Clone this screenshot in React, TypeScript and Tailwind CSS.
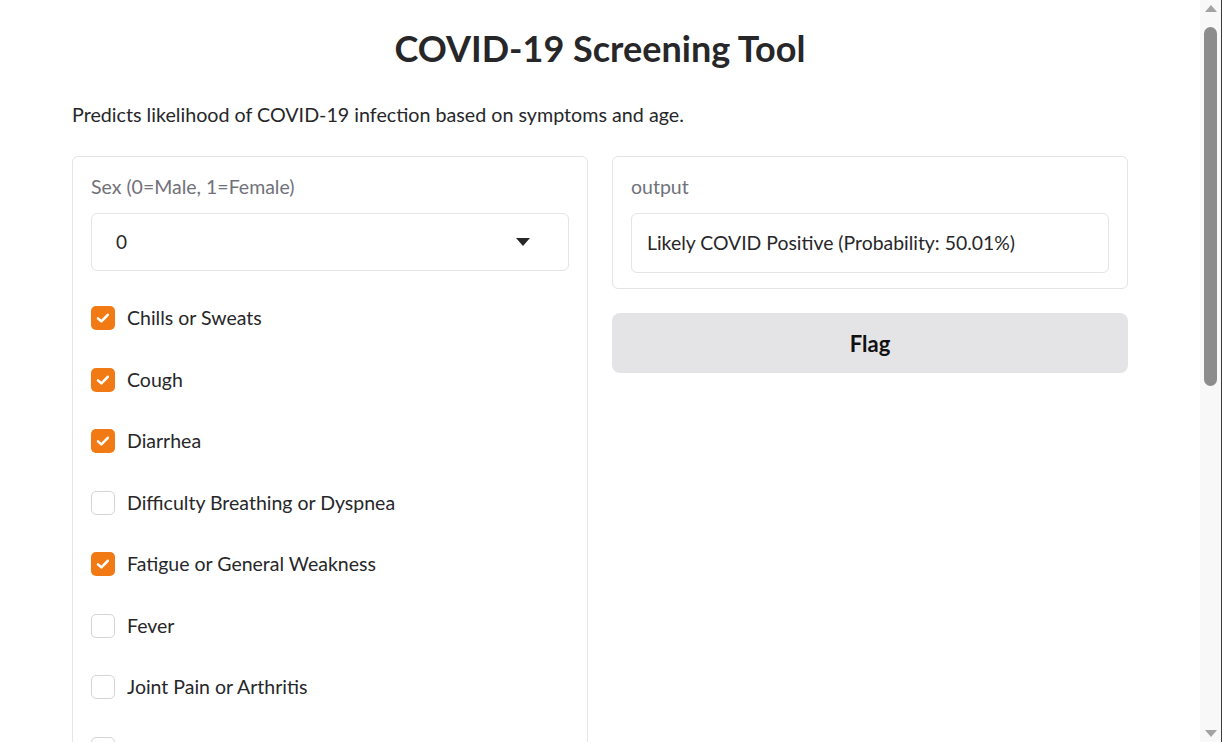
import React from "react";

const items: { label: string; checked: boolean }[] = [
  { label: "Chills or Sweats", checked: true },
  { label: "Cough", checked: true },
  { label: "Diarrhea", checked: true },
  { label: "Difficulty Breathing or Dyspnea", checked: false },
  { label: "Fatigue or General Weakness", checked: true },
  { label: "Fever", checked: false },
  { label: "Joint Pain or Arthritis", checked: false },
  { label: "Loss of Smell", checked: false },
  { label: "Loss of Taste", checked: false },
];

function Box({ checked }: { checked: boolean }) {
  if (checked) {
    return (
      <div className="w-[24px] h-[24px] rounded-[5px] bg-[#f27a14] flex items-center justify-center shrink-0">
        <svg width="16" height="16" viewBox="0 0 16 16" fill="none">
          <path d="M3 8.4 L6.4 11.4 L12.8 4.8" stroke="white" strokeWidth="2.6" strokeLinecap="round" strokeLinejoin="round" />
        </svg>
      </div>
    );
  }
  return <div className="w-[24px] h-[24px] rounded-[5px] border border-[#d4d4d8] bg-white shrink-0" />;
}

export default function App() {
  return (
    <div
      className="flex h-[742px] w-full overflow-hidden bg-white text-[#27272a]"
      style={{ fontFamily: "Lato, 'Noto Sans', sans-serif" }}
    >
      <div className="flex-1 min-w-0">
        <div className="w-[1056px] mx-auto">
          <h1 className="pt-[26px] text-center text-[36px] leading-[44px] font-bold text-[#27272a]">
            COVID-19 Screening Tool
          </h1>
          <p className="mt-[31px] text-[19.7px] leading-[27px]">
            Predicts likelihood of COVID-19 infection based on symptoms and age.
          </p>
          <div className="mt-[28px] grid grid-cols-[516px_516px] gap-[24px] items-start">
            <div className="border border-[#e4e4e7] rounded-[6px] px-[18px] pt-[16px] pb-[30px]">
              <div className="text-[19.5px] leading-[27px] text-[#71717a]">Sex (0=Male, 1=Female)</div>
              <div className="mt-[13px] h-[58px] border border-[#e4e4e7] rounded-[6px] flex items-center pl-[24px] pr-[38px] justify-between">
                <span className="text-[19px]">0</span>
                <svg width="14" height="8" viewBox="0 0 14 8">
                  <path d="M0 0 L14 0 L7 8 Z" fill="#27272a" />
                </svg>
              </div>
              <div className="mt-[35px] flex flex-col gap-[37.5px]">
                {items.map((it) => (
                  <div key={it.label} className="flex items-center gap-[12px] h-[24px]">
                    <Box checked={it.checked} />
                    <span className="text-[19.5px] leading-[24px]">{it.label}</span>
                  </div>
                ))}
              </div>
            </div>
            <div className="flex flex-col">
              <div className="border border-[#e4e4e7] rounded-[6px] px-[18px] pt-[16px] pb-[15px]">
                <div className="text-[19.5px] leading-[27px] text-[#71717a]">output</div>
                <div className="mt-[13px] h-[60px] border border-[#e4e4e7] rounded-[6px] flex items-center pl-[15px]">
                  <span className="text-[19.4px]">Likely COVID Positive (Probability: 50.01%)</span>
                </div>
              </div>
              <button className="mt-[24px] h-[60px] rounded-[8px] bg-[#e4e4e7] text-[22px] font-bold text-[#111]">
                Flag
              </button>
            </div>
          </div>
        </div>
      </div>
      <div className="w-[22px] h-full bg-[#f8f8f8] border-r border-[#3a3a3a] flex flex-col items-center">
        <svg className="mt-[5px]" width="12" height="7" viewBox="0 0 12 7">
          <path d="M0 7 L6 0 L12 7 Z" fill="#a3a3a3" />
        </svg>
        <div className="mt-[15px] w-[13px] h-[359px] rounded-full bg-[#8c8c8c]" />
        <div className="flex-1" />
        <svg className="mb-[5px]" width="12" height="7" viewBox="0 0 12 7">
          <path d="M0 0 L6 7 L12 0 Z" fill="#a3a3a3" />
        </svg>
      </div>
    </div>
  );
}
